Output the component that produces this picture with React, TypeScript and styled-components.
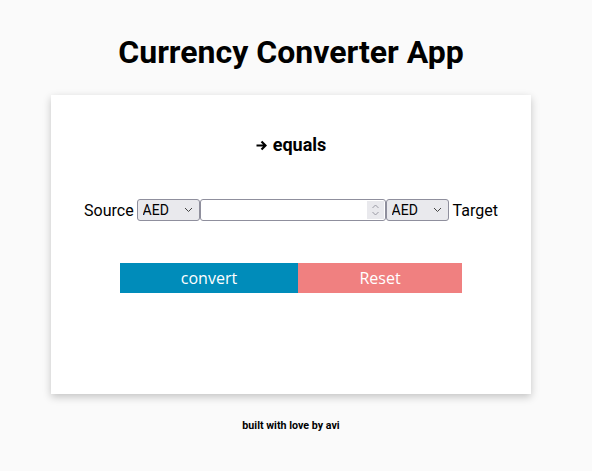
import React from "react";
import styled, { createGlobalStyle } from "styled-components";

const Global = createGlobalStyle`
  html, body { margin: 0; padding: 0; background: #fafafa; }
  body { font-family: Roboto, "Liberation Sans", sans-serif; color: #000; }
`;

const Page = styled.div`
  display: flex;
  flex-direction: column;
  align-items: center;
  padding: 33px 10px 0 0;
`;

const Title = styled.h1`
  margin: 0 0 24px;
  font-size: 32px;
  font-weight: 700;
  line-height: 38px;
`;

const Card = styled.div`
  width: 480px;
  height: 299px;
  background: #fff;
  box-shadow: 0 3px 8px rgba(0, 0, 0, 0.22);
  display: flex;
  flex-direction: column;
  align-items: center;
  box-sizing: border-box;
  padding-top: 38px;
`;

const Result = styled.h3`
  margin: 0;
  font-size: 18px;
  font-weight: 700;
  line-height: 24px;
  display: flex;
  align-items: center;
  gap: 6px;
`;

const Row = styled.div`
  display: flex;
  align-items: center;
  margin-top: 42px;
  font-size: 16px;
`;

const Label = styled.span<{ $side: "l" | "r" }>`
  margin: ${(p) => (p.$side === "l" ? "0 3px 0 0" : "0 0 0 4px")};
`;

const Field = styled.div<{ $w: number }>`
  position: relative;
  width: ${(p) => p.$w}px;
  height: 22px;
`;

const Select = styled.select`
  appearance: none;
  -webkit-appearance: none;
  width: 100%;
  height: 100%;
  margin: 0;
  padding: 0 0 0 5px;
  border: 1px solid #8f8f9d;
  border-radius: 3px;
  background: #e9e9ed;
  color: #000;
  font-family: Roboto, "Liberation Sans", sans-serif;
  font-size: 14px;
  box-sizing: border-box;
  outline: none;
`;

const Chevron = styled.svg`
  position: absolute;
  right: 7px;
  top: 8px;
  pointer-events: none;
`;

const Amount = styled.input`
  appearance: textfield;
  -moz-appearance: textfield;
  width: 100%;
  height: 100%;
  box-sizing: border-box;
  margin: 0;
  padding: 0 24px 0 4px;
  border: 1px solid #8f8f9d;
  border-radius: 3px;
  background: #fff;
  font-family: Roboto, "Liberation Sans", sans-serif;
  font-size: 14px;
  outline: none;
  &::-webkit-inner-spin-button,
  &::-webkit-outer-spin-button {
    -webkit-appearance: none;
    margin: 0;
  }
`;

const Spinner = styled.div`
  position: absolute;
  right: 2px;
  top: 2px;
  width: 17px;
  height: 18px;
  background: #e9e9ed;
  display: flex;
  align-items: center;
  justify-content: center;
  pointer-events: none;
`;

const Buttons = styled.div`
  display: flex;
  margin-top: 42px;
`;

const Btn = styled.button<{ $bg: string; $w: number }>`
  width: ${(p) => p.$w}px;
  height: 30px;
  border: none;
  background: ${(p) => p.$bg};
  color: #fff;
  font-family: "Open Sans", "Noto Sans", sans-serif;
  font-size: 16px;
  padding: 0;
`;

const Footer = styled.p`
  margin: 25px 0 0;
  font-size: 10.7px;
  line-height: 13px;
  font-weight: 700;
`;

function CurrencySelect() {
  return (
    <Field $w={63}>
      <Select defaultValue="AED">
        <option>AED</option>
        <option>USD</option>
        <option>EUR</option>
      </Select>
      <Chevron width="9" height="6" viewBox="0 0 9 6">
        <path d="M1 1 L4.5 4.5 L8 1" fill="none" stroke="#444" strokeWidth="1" />
      </Chevron>
    </Field>
  );
}

export default function App() {
  return (
    <>
      <Global />
      <Page>
        <Title>Currency Converter App</Title>
        <Card>
          <Result>
            <svg width="11" height="11" viewBox="0 0 11 11">
              <path d="M0.5 5.5 H9.5 M5.5 1.5 L9.5 5.5 L5.5 9.5" fill="none" stroke="#000" strokeWidth="2.2" />
            </svg>
            equals
          </Result>
          <Row>
            <Label $side="l">Source</Label>
            <CurrencySelect />
            <Field $w={186}>
              <Amount type="number" />
              <Spinner>
                <svg width="9" height="14" viewBox="0 0 9 14">
                  <path d="M1.5 5 L4.5 2 L7.5 5 M1.5 9 L4.5 12 L7.5 9" fill="none" stroke="#9a9aa4" strokeWidth="1" />
                </svg>
              </Spinner>
            </Field>
            <CurrencySelect />
            <Label $side="r">Target</Label>
          </Row>
          <Buttons>
            <Btn $bg="#008cba" $w={178}>convert</Btn>
            <Btn $bg="#f08080" $w={164}>Reset</Btn>
          </Buttons>
        </Card>
        <Footer>built with love by avi</Footer>
      </Page>
    </>
  );
}
